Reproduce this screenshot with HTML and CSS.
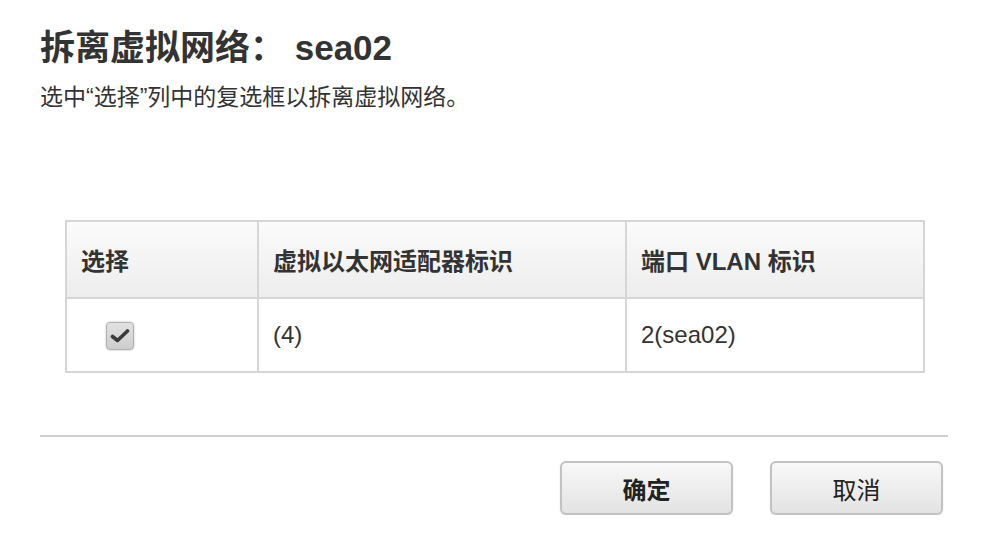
FILE: index.html
```html
<!DOCTYPE html>
<html lang="zh-CN">
<head>
  <meta charset="UTF-8" />
  <title>拆离虚拟网络</title>
  <link rel="stylesheet" href="styles.css">
</head>
<body>
  <div class="dialog">
    <h1 class="title">拆离虚拟网络： sea02</h1>
    <p class="desc">选中“选择”列中的复选框以拆离虚拟网络。</p>

    <table class="grid">
      <thead>
        <tr>
          <th class="col-sel">选择</th>
          <th class="col-adapter">虚拟以太网适配器标识</th>
          <th class="col-vlan">端口 VLAN 标识</th>
        </tr>
      </thead>
      <tbody>
        <tr>
          <td class="cell-check"><span class="check"><svg width="20" height="16" viewBox="0 0 20 16"><path d="M2.5 8.5 L7.5 12.5 L17.5 3" fill="none" stroke="#3a3a3a" stroke-width="3.6" stroke-linecap="round" stroke-linejoin="round"/></svg></span></td>
          <td>(4)</td>
          <td>2(sea02)</td>
        </tr>
      </tbody>
    </table>

    <div class="footer">
      <button class="btn btn-primary">确定</button>
      <button class="btn">取消</button>
    </div>
  </div>
</body>
</html>
```

FILE: styles.css
```css
body {
  margin: 0;
  background: #fff;
  color: #333;
  font-family: "Liberation Sans", "Noto Sans CJK SC", sans-serif;
}

.dialog {
  width: 908px;
  padding: 26px 0 0 40px;
}

.title {
  margin: 0;
  font-size: 35px;
  line-height: 44px;
  font-weight: bold;
  color: #333;
}

.desc {
  margin: 12px 0 0;
  font-size: 23px;
  line-height: 30px;
}

.grid {
  margin: 108px 0 0 25px;
  width: 860px;
  border-collapse: collapse;
  font-size: 24px;
}

.grid th,
.grid td {
  border: 2px solid #d6d6d6;
  text-align: left;
  padding: 0 14px;
}

.grid th {
  height: 75px;
  font-weight: bold;
  background: linear-gradient(#fbfbfb, #ededed);
}

.grid td {
  height: 72px;
}

.col-sel {
  width: 162px;
}

.col-adapter {
  width: 338px;
}

.grid .cell-check {
  padding-left: 39px;
}

.check {
  display: inline-flex;
  align-items: center;
  justify-content: center;
  width: 26px;
  height: 26px;
  border-radius: 4px;
  border: 1px solid #b0b0b0;
  background: linear-gradient(#e2e2e2, #cdcdcd);
  box-shadow: 0 0 2px rgba(0, 0, 0, 0.3);
  vertical-align: middle;
}

.footer {
  margin-top: 62px;
  border-top: 2px solid #d0d0d0;
  padding: 24px 5px 0 0;
  display: flex;
  justify-content: flex-end;
  gap: 37px;
}

.btn {
  width: 173px;
  height: 54px;
  font-family: inherit;
  font-size: 24px;
  color: #222;
  background: linear-gradient(#f8f8f8, #e3e3e3);
  border: 2px solid #c2c2c2;
  border-radius: 6px;
  box-shadow: 0 1px 2px rgba(0, 0, 0, 0.1);
}

.btn-primary {
  font-weight: bold;
}
```
